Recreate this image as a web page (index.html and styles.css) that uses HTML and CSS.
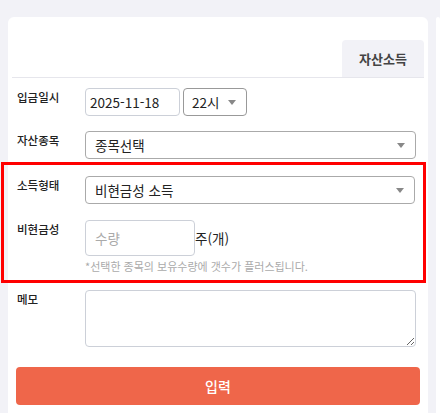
FILE: index.html
```html
<!DOCTYPE html>
<html lang="ko">
<head>
<meta charset="utf-8">
<link rel="stylesheet" href="styles.css">
</head>
<body>
<div class="page">
  <div class="card">
    <div class="tabs">
      <div class="tab">자산소득</div>
    </div>
    <div class="form">
      <div class="row">
        <div class="label">입금일시</div>
        <div class="field inline">
          <input class="input date" type="text" value="2025-11-18">
          <div class="select-wrap hour">
            <select class="select dark"><option>22시</option></select>
          </div>
        </div>
      </div>
      <div class="row pre-group">
        <div class="label">자산종목</div>
        <div class="field">
          <div class="select-wrap">
            <select class="select"><option>종목선택</option></select>
          </div>
        </div>
      </div>
      <div class="group">
        <div class="row">
          <div class="label">소득형태</div>
          <div class="field">
            <div class="select-wrap">
              <select class="select"><option>비현금성 소득</option></select>
            </div>
          </div>
        </div>
        <div class="row qty-row">
          <div class="label">비현금성</div>
          <div class="field">
            <div class="inline">
              <input class="input qty" type="text" placeholder="수량">
              <span class="unit">주(개)</span>
            </div>
            <p class="help">*선택한 종목의 보유수량에 갯수가 플러스됩니다.</p>
          </div>
        </div>
      </div>
      <div class="row memo-row">
        <div class="label">메모</div>
        <div class="field">
          <textarea class="memo"></textarea>
        </div>
      </div>
      <button class="submit">입력</button>
    </div>
  </div>
  <div class="card side"></div>
</div>
</body>
</html>
```

FILE: styles.css
```css
* { box-sizing: border-box; }
html, body { margin: 0; height: 100%; }
body {
  background: #f2f2f7;
  font-family: "Noto Sans CJK KR", "Noto Sans", sans-serif;
  color: #333;
  overflow: hidden;
}
.page {
  display: flex;
  gap: 8px;
  width: 440px;
  height: 413px;
  overflow: hidden;
  padding: 17px 0 0 8px;
}
.card {
  flex: 0 0 420px;
  background: #fff;
  border-radius: 6px 6px 0 0;
  padding: 0 4px;
  height: 396px;
}
.card.side { flex: 1 1 auto; padding: 0; }
.tabs {
  height: 61px;
  display: flex;
  justify-content: flex-end;
  align-items: flex-end;
  border-bottom: 1px solid #e6e6ec;
}
.tab {
  width: 82px;
  height: 37px;
  background: #f2f2f7;
  border-radius: 4px 4px 0 0;
  display: flex;
  align-items: center;
  justify-content: center;
  font-size: 13px;
  font-weight: 700;
  color: #444;
}
.form { padding-top: 10px; }
.row {
  display: flex;
  padding-left: 5px;
  margin-bottom: 15px;
}
.row.pre-group { margin-bottom: 6px; }
.label {
  flex: 0 0 68px;
  font-size: 11.5px;
  font-weight: 500;
  line-height: 18px;
  color: #222;
}
.field { flex: 1; padding-right: 8px; }
.inline { display: flex; align-items: center; gap: 3px; }
.input {
  height: 28px;
  border: 1px solid #ccd0d8;
  border-radius: 4px;
  padding: 0 4px;
  font-family: inherit;
  font-size: 13.5px;
  color: #222;
  outline: none;
}
.input.date { width: 95px; }
.select-wrap { position: relative; }
.select-wrap::after {
  content: "";
  position: absolute;
  right: 11px;
  top: 12px;
  border-left: 4px solid transparent;
  border-right: 4px solid transparent;
  border-top: 5px solid #888;
  pointer-events: none;
}
.hour { width: 64px; }
.select {
  -webkit-appearance: none;
  appearance: none;
  width: 100%;
  height: 28px;
  border: 1px solid #aaa;
  border-radius: 4px;
  background: #fff;
  padding: 0 9px;
  font-family: inherit;
  font-size: 13.5px;
  color: #222;
  outline: none;
}
.select.dark { border-color: #999; padding-left: 8px; }
.group {
  outline: 3px solid #f00;
  margin: 0 1px 10px -8px;
  padding: 11px 0 6px 8px;
}
.group .row:first-child { margin-bottom: 16px; }
.group .qty-row { margin-bottom: 0; }
.input.qty {
  width: 110px;
  height: 36px;
  padding: 0 9px;
}
.input.qty::placeholder { color: #aaa; }
.unit { font-size: 13.5px; color: #222; margin-left: -3px; }
.help {
  margin: 2px 0 0;
  font-size: 11px;
  line-height: 16px;
  color: #aaa;
}
.memo-row { margin-bottom: 20px; }
.memo {
  display: block;
  width: 100%;
  height: 57px;
  border: 1px solid #ccd0d8;
  border-radius: 4px;
  font-family: inherit;
  outline: none;
}
.submit {
  display: block;
  width: 404px;
  height: 38px;
  margin-left: 4px;
  border: none;
  border-radius: 4px;
  background: #ef664a;
  color: #fff;
  font-family: inherit;
  font-size: 14px;
  font-weight: 500;
}
```
